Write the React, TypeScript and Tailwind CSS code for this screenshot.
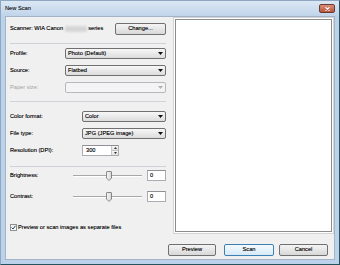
import React from "react";

function Combo({ text, disabled, className = "" }: { text?: string; disabled?: boolean; className?: string }) {
  return (
    <div
      className={
        "h-[11px] flex items-center rounded-[2px] border pl-[2px] pr-[2px] " +
        (disabled
          ? "border-[#b5b9bd] bg-[#f4f4f4]"
          : "border-[#707070] bg-gradient-to-b from-[#f7f7f7] to-[#dcdcdc]") +
        " " +
        className
      }
    >
      <span className="flex-1 truncate">{text}</span>
      <svg width="5" height="3" viewBox="0 0 5 3">
        <path d="M0 0 H5 L2.5 3 Z" fill={disabled ? "#b0b0b0" : "#111"} />
      </svg>
    </div>
  );
}

function Btn({ children, className = "", primary }: { children: React.ReactNode; className?: string; primary?: boolean }) {
  return (
    <div
      className={
        "h-[12px] flex items-center justify-center rounded-[2px] border " +
        (primary
          ? "border-[#3c7fb1] bg-gradient-to-b from-[#f4fafd] to-[#d6eaf8]"
          : "border-[#707070] bg-gradient-to-b from-[#f4f4f4] to-[#d8d8d8]") +
        " " +
        className
      }
    >
      {children}
    </div>
  );
}

function Slider() {
  return (
    <div className="relative w-[69px] h-[11px] flex items-center">
      <div className="w-full h-[2px] border-t border-[#a8a8a8] border-b border-b-[#ffffff] bg-[#e2e2e2]" />
      <svg className="absolute left-[33px] top-[1px]" width="6" height="10" viewBox="0 0 6 10">
        <defs>
          <linearGradient id="tg" x1="0" y1="0" x2="1" y2="0">
            <stop offset="0" stopColor="#fafafa" />
            <stop offset="1" stopColor="#d4d4d4" />
          </linearGradient>
        </defs>
        <path d="M0.5 1 Q0.5 0.5 1 0.5 H5 Q5.5 0.5 5.5 1 V7 L3 9.5 L0.5 7 Z" fill="url(#tg)" stroke="#6f6f6f" strokeWidth="0.8" />
      </svg>
    </div>
  );
}

function NumBox({ value }: { value: string }) {
  return (
    <div className="ml-[5px] w-[19px] h-[11px] flex items-center border border-[#abadb3] border-t-[#8e9096] bg-white pl-[2px]">
      {value}
    </div>
  );
}

export default function App() {
  return (
    <div className="w-[340px] h-[265px] flex flex-col bg-[#bcd2ea] border border-[#8ea7c1] border-r-[#24525d] border-b-[#24525d] font-['Liberation_Sans',Arial,sans-serif] text-[5.7px] leading-none text-black [text-shadow:0_0_0.25px_rgba(0,0,0,0.5)] overflow-hidden">
      {/* title bar */}
      <div className="h-[15px] flex items-center pl-[4px] pr-[4px] bg-gradient-to-b from-[#dbe7f4] to-[#c0d4ea]">
        <span className="text-[#1a1a1a]">New Scan</span>
        <div className="ml-auto w-[16px] h-[9px] rounded-[2px] border border-[#6b3a2e] bg-gradient-to-b from-[#d98f77] to-[#b8553b] flex items-center justify-center">
          <svg width="5" height="4" viewBox="0 0 5 4">
            <path d="M0.5 0.3 L4.5 3.7 M4.5 0.3 L0.5 3.7" stroke="#fff" strokeWidth="1.1" />
          </svg>
        </div>
      </div>

      {/* content */}
      <div className="flex-1 mx-[4px] mb-[4px] bg-[#f0f0f0] border border-[#a3b4c6] flex flex-col">
        <div className="flex h-[218px]">
          {/* left column */}
          <div className="w-[160px] pl-[4px] flex flex-col">
            <div className="mt-[6px] h-[11px] flex items-center">
              <span>Scanner: WIA Canon</span>
              <span className="ml-[2px] w-[22px] h-[6px] rounded-[2px] bg-[#d6d6d6] blur-[1px]" />
              <span className="ml-[1px]">series</span>
              <Btn className="ml-auto w-[51px]">Change...</Btn>
            </div>

            <div className="mt-[9px] h-px bg-[#cfd3d7]" />

            <div className="mt-[4px] flex flex-col gap-[6px]">
              <div className="h-[11px] flex items-center">
                <span className="w-[55px]">Profile:</span>
                <Combo className="flex-1" text="Photo (Default)" />
              </div>
              <div className="h-[11px] flex items-center">
                <span className="w-[55px]">Source:</span>
                <Combo className="flex-1" text="Flatbed" />
              </div>
              <div className="h-[11px] flex items-center">
                <span className="w-[55px] text-[#a3a3a3] [text-shadow:none]">Paper size:</span>
                <Combo className="flex-1" disabled />
              </div>
            </div>

            <div className="mt-[8px] h-px bg-[#cfd3d7]" />

            <div className="mt-[9px] flex flex-col gap-[6px]">
              <div className="h-[11px] flex items-center">
                <span className="w-[72px]">Color format:</span>
                <Combo className="flex-1" text="Color" />
              </div>
              <div className="h-[11px] flex items-center">
                <span className="w-[72px]">File type:</span>
                <Combo className="flex-1" text="JPG (JPEG image)" />
              </div>
              <div className="h-[11px] flex items-center">
                <span className="w-[72px]">Resolution (DPI):</span>
                <div className="w-[37px] h-[11px] flex border border-[#abadb3] border-t-[#8e9096] bg-white">
                  <span className="flex-1 flex items-center pl-[3px]">300</span>
                  <div className="w-[7px] flex flex-col border-l border-[#c8c8c8]">
                    <div className="flex-1 flex items-center justify-center bg-gradient-to-b from-[#f6f6f6] to-[#e3e3e3] border-b border-[#c8c8c8]">
                      <svg width="3" height="2" viewBox="0 0 3 2"><path d="M0 2 L1.5 0 L3 2 Z" fill="#333" /></svg>
                    </div>
                    <div className="flex-1 flex items-center justify-center bg-gradient-to-b from-[#f6f6f6] to-[#e3e3e3]">
                      <svg width="3" height="2" viewBox="0 0 3 2"><path d="M0 0 L1.5 2 L3 0 Z" fill="#333" /></svg>
                    </div>
                  </div>
                </div>
              </div>
            </div>

            <div className="mt-[10px] h-px bg-[#cfd3d7]" />

            <div className="mt-[3px] h-[11px] flex items-center">
              <span className="w-[63px]">Brightness:</span>
              <Slider />
              <NumBox value="0" />
            </div>
            <div className="mt-[10px] h-[11px] flex items-center">
              <span className="w-[63px]">Contrast:</span>
              <Slider />
              <NumBox value="0" />
            </div>

            <div className="mt-[22px] h-[7px] flex items-center">
              <div className="w-[7px] h-[7px] border border-[#8e8f8f] bg-gradient-to-b from-[#f0f0f0] to-[#ffffff] flex items-center justify-center">
                <svg width="5" height="5" viewBox="0 0 5 5">
                  <path d="M0.6 2.6 L2 4 L4.4 0.8" fill="none" stroke="#1f3d6b" strokeWidth="1" />
                </svg>
              </div>
              <span className="ml-[1px]">Preview or scan images as separate files</span>
            </div>
          </div>

          {/* preview pane */}
          <div className="ml-[7px] w-[161px] h-[217px] border border-[#d4d4d4] bg-white p-[1px]">
            <div className="w-full h-full border border-[#8c8c8c] bg-white" />
          </div>
        </div>

        <div className="mt-[9px] flex">
          <Btn className="ml-auto w-[48px]">Preview</Btn>
          <Btn className="ml-[8px] w-[50px]" primary>Scan</Btn>
          <Btn className="ml-[5px] mr-[6px] w-[49px]">Cancel</Btn>
        </div>
      </div>
    </div>
  );
}
